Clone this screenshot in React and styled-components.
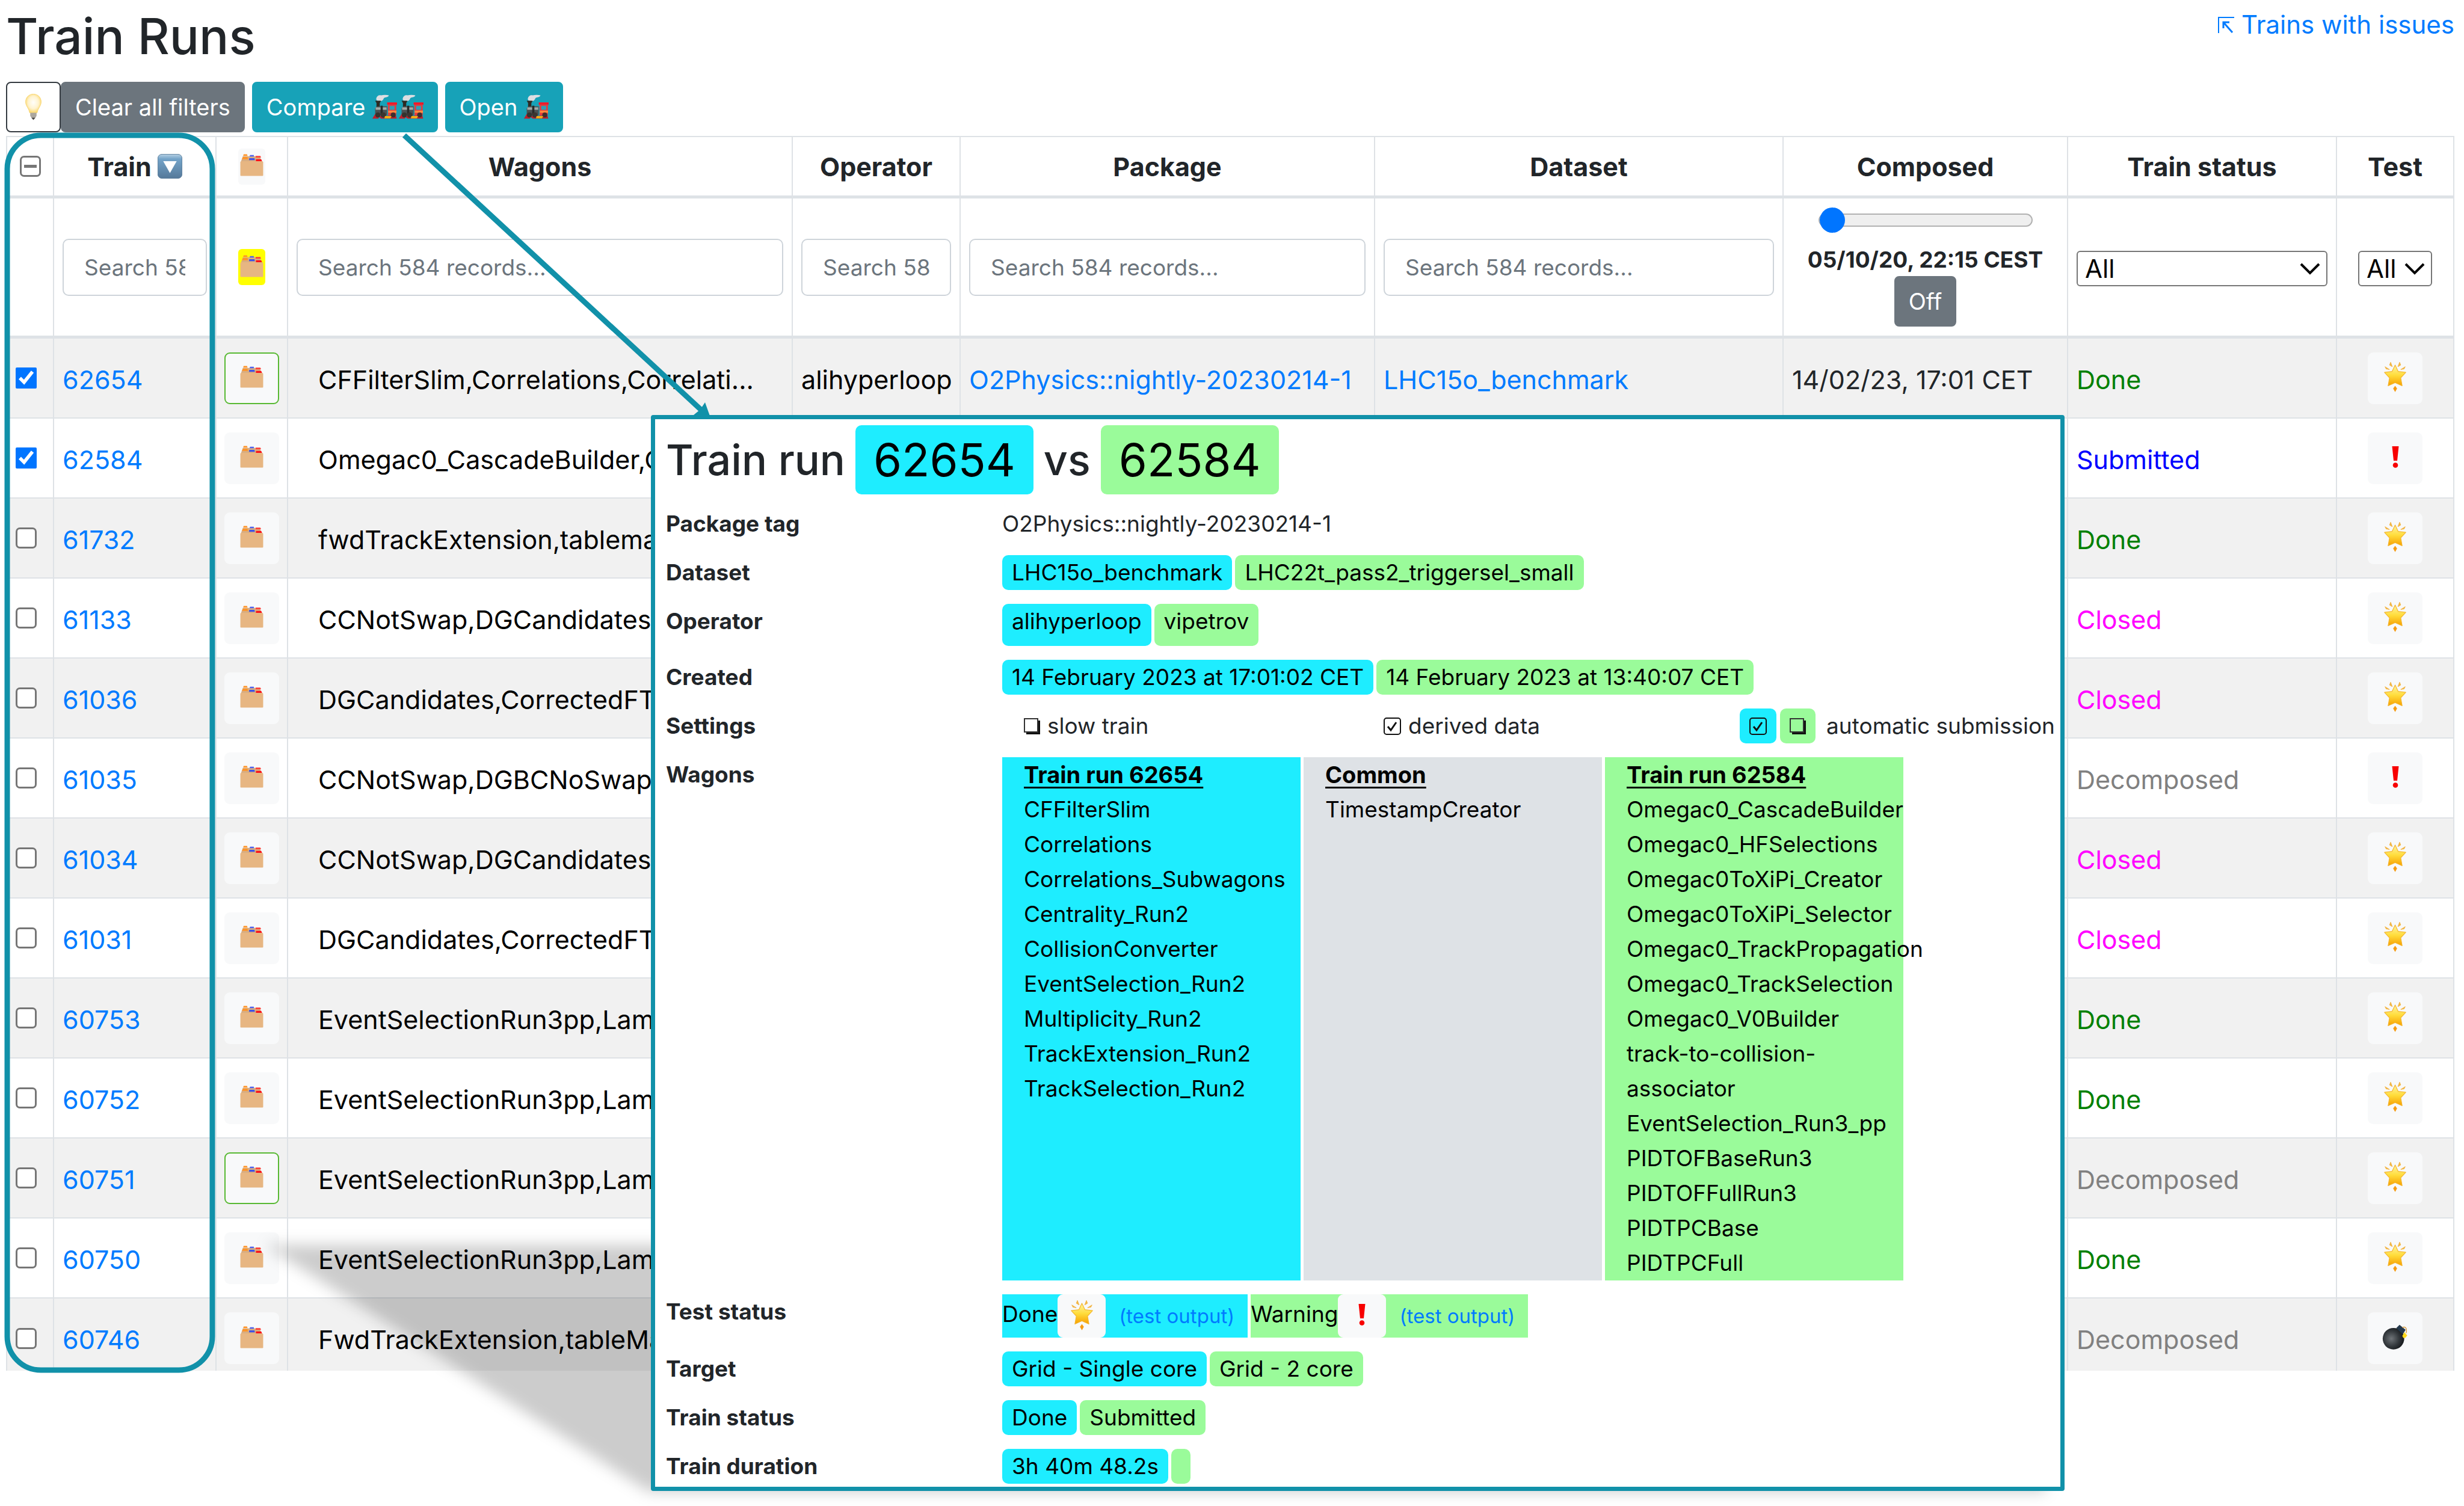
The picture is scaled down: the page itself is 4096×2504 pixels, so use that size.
import React from "react";
import styled, { createGlobalStyle, css } from "styled-components";

const TEAL = "#1191a9";
const CYAN = "#1eedff";
const GREEN = "#9afb9a";
const LINE = "#dee2e6";
const INK = "#212529";

const GlobalStyle = createGlobalStyle`
  *, *::before, *::after { box-sizing: border-box; }
  body { margin: 0; background: #fff; }
  button, input, select { font-family: inherit; margin: 0; }
  a { color: #007bff; text-decoration: none; }
`;

const Page = styled.div`
  position: relative;
  min-height: 100vh;
  padding: 0 16px 0 10px;
  overflow: hidden;
  font-family: Inter, "Liberation Sans", sans-serif;
  font-size: 42px;
  line-height: 62px;
  color: ${INK};
`;

const Header = styled.header`
  display: flex;
  justify-content: space-between;
  align-items: flex-start;
  padding: 11px 0 25px;
`;

const Title = styled.h1`
  margin: 0;
  font-size: 82px;
  line-height: 100px;
  font-weight: 500;
`;

const IssuesLink = styled.a`
  display: flex;
  align-items: center;
  gap: 12px;
  line-height: 60px;
`;

const Toolbar = styled.div`
  display: flex;
  gap: 12px;
  margin-bottom: 6px;
`;

const Joined = styled.div`
  display: flex;
`;

const Button = styled.button`
  display: flex;
  align-items: center;
  justify-content: center;
  gap: 11px;
  height: 84px;
  padding: 0 22px;
  border: 2px solid ${(p) => p.$tone};
  border-radius: 8px;
  background: ${(p) => p.$tone};
  color: #fff;
  font-size: 38px;
  ${(p) =>
    p.$outline &&
    css`
      border-color: #343a40;
      background: #fff;
      width: 91px;
    `}
`;

const Engines = styled.span`
  display: flex;
  gap: 3px;
`;

const Runs = styled.table`
  width: 100%;
  table-layout: fixed;
  border-collapse: separate;
  border-spacing: 0;
  font-size: 43px;
`;

const cell = css`
  padding: 0 14px;
  border-right: 2px solid ${LINE};
  &:first-child {
    border-left: 2px solid ${LINE};
  }
`;

const HeadCell = styled.th`
  ${cell}
  height: 104px;
  border-top: 2px solid ${LINE};
  border-bottom: 5px solid ${LINE};
  font-weight: 700;
  text-align: center;
`;

const FilterCell = styled.td`
  ${cell}
  height: 233px;
  border-bottom: 5px solid ${LINE};
  text-align: center;
`;

const Row = styled.tr`
  background: ${(p) => (p.$striped ? "#f1f1f1" : "#fff")};
`;

const Cell = styled.td`
  ${cell}
  height: ${(p) => (p.$last ? "120px" : "133px")};
  padding-top: ${(p) => (p.$last ? "12px" : "0")};
  padding-left: ${(p) => (p.$indent ? "50px" : "14px")};
  border-bottom: ${(p) => (p.$last ? "0" : "2px")} solid ${LINE};
`;

const CellText = styled.div`
  padding-top: 4px;
  color: ${(p) => p.$color || INK};
  white-space: nowrap;
`;

const HeadLabel = styled.span`
  display: inline-flex;
  align-items: center;
  gap: 10px;
`;

const Tick = styled.input`
  display: block;
  width: 35px;
  height: 35px;
  accent-color: #0075ff;
  &:not(:checked) {
    appearance: none;
    border: 3px solid #767676;
    border-radius: 7px;
    background: #fff;
  }
`;

const HeadTick = styled(Tick)`
  margin: 0 auto;
  &&:not(:checked) {
    background: linear-gradient(#767676, #767676) center / 21px 5px no-repeat #fff;
  }
`;

const Center = styled.div`
  display: flex;
  justify-content: center;
`;

const IconButton = styled.button`
  display: flex;
  align-items: center;
  justify-content: center;
  flex: none;
  width: ${(p) => (p.$small ? "45px" : "91px")};
  height: ${(p) => (p.$small ? "60px" : "86px")};
  padding: 0 0 4px;
  border: ${(p) => (p.$marked ? "2px solid #58b933" : "0")};
  border-radius: ${(p) => (p.$small ? "6px" : "9px")};
  background: ${(p) => (p.$active ? "#ffff00" : "#f8f9fa")};
`;

const Search = styled.input`
  display: block;
  width: 100%;
  height: 95px;
  padding: 0 34px;
  border: 2px solid #ced4da;
  border-radius: 10px;
  background: #fff;
  font-size: 37px;
  &::placeholder {
    color: #6c757d;
    opacity: 1;
  }
`;

const SliderStack = styled.div`
  display: flex;
  flex-direction: column;
  align-items: center;
`;

const Slider = styled.input`
  appearance: none;
  width: 356px;
  height: 42px;
  background: none;
  &::-webkit-slider-runnable-track {
    height: 22px;
    border: 2px solid #b2b2b2;
    border-radius: 11px;
    background: #efefef;
  }
  &::-webkit-slider-thumb {
    appearance: none;
    width: 42px;
    height: 42px;
    margin-top: -12px;
    border-radius: 50%;
    background: #0075ff;
  }
`;

const SliderLabel = styled.label`
  margin-top: 18px;
  font-size: 37px;
  line-height: 54px;
  font-weight: 700;
  white-space: nowrap;
`;

const SelectBox = styled.span`
  display: inline-grid;
  align-items: center;
  width: ${(p) => (p.$wide ? "100%" : "123px")};
  vertical-align: middle;
  & > * {
    grid-area: 1 / 1;
  }
  & > svg {
    justify-self: end;
    margin-right: 12px;
    pointer-events: none;
  }
`;

const Select = styled.select`
  appearance: none;
  width: 100%;
  height: 59px;
  padding: 0 12px;
  border: 2px solid #767676;
  border-radius: 6px;
  background: #fff;
  color: #000;
  font-size: 42px;
  line-height: 50px;
`;

const Overlay = styled.svg`
  position: absolute;
  top: 0;
  left: 0;
  pointer-events: none;
`;

const Popup = styled.section`
  position: absolute;
  top: 690px;
  left: 1082px;
  width: 2350px;
  padding: 10px 0 5px 18px;
  border: 7px solid ${TEAL};
  border-radius: 4px;
  background: #fff;
  font-size: 37px;
  line-height: 58px;
`;

const PopupTitle = styled.h2`
  display: flex;
  align-items: center;
  gap: 17px;
  margin: 0 0 20px;
  font-size: 70px;
  line-height: 115px;
  font-weight: 500;
`;

const Badge = styled.span`
  padding: 0 30px;
  border-radius: 10px;
  background: ${(p) => p.$bg};
  color: #000;
  font-size: 76px;
  font-weight: 400;
`;

const Details = styled.dl`
  display: flex;
  flex-direction: column;
  gap: 23px;
  margin: 0;
`;

const Detail = styled.div`
  display: grid;
  grid-template-columns: 559px 1fr;
  dt {
    font-weight: 700;
  }
  dd {
    display: flex;
    gap: 5px;
    min-width: 0;
    margin: 0;
  }
`;

const Pill = styled.span`
  min-height: ${(p) => (p.$tall ? "70px" : "58px")};
  padding: 0 16px;
  border-radius: 10px;
  background: ${(p) => p.$bg};
  color: #000;
  white-space: nowrap;
`;

const Settings = styled.div`
  display: grid;
  grid-template-columns: 34% 34% 1fr;
  width: 100%;
`;

const Setting = styled.span`
  display: flex;
  align-items: center;
  gap: ${(p) => (p.$pair ? "6px" : "12px")};
  padding-left: ${(p) => (p.$pair ? "30px" : "36px")};
  white-space: nowrap;
`;

const SettingText = styled.span`
  padding-left: 12px;
`;

const MarkPill = styled(Pill)`
  display: flex;
  align-items: center;
`;

const Wagons = styled.div`
  flex: none;
  width: 496px;
  padding: 0 36px;
  background: ${(p) => p.$bg};
  color: #000;
  h3 {
    margin: 0;
    font-size: 38px;
    font-weight: 700;
    text-decoration: underline;
    text-decoration-thickness: 3px;
    text-underline-offset: 6px;
  }
  ul {
    margin: 0;
    padding: 0;
    list-style: none;
  }
`;

const Result = styled.span`
  display: flex;
  align-items: center;
  height: 72px;
  background: ${(p) => p.$bg};
  color: #000;
  a {
    padding: 0 22px;
    font-size: 33px;
  }
`;

const ResultText = styled.span`
  padding-bottom: 6px;
`;

const ResultButton = styled(IconButton)`
  width: 80px;
  height: 72px;
`;

function Binder() {
  return (
    <svg width="39" height="37" viewBox="0 0 42 40">
      <path d="M5 4h30l4.500 10h-38z" fill="#d9ad80" />
      <path d="M6.500.5h6l1 3H5.500z" fill="#ff9427" />
      <path d="M5 5.500h8.500l.5 4H3.500z" fill="#ff9427" />
      <path d="M18 2h6.500l.7 2.500H17z" fill="#4f63f0" />
      <path d="M16.500 7.500h9.500l.5 3.500H16z" fill="#3f52e6" />
      <path d="M28 3.500h8.500l1.200 3H28z" fill="#ff4038" />
      <path d="M28.500 9.500h9.500l1.500 3.500h-11z" fill="#fb1018" />
      <path d="M.5 14.500 2 13h38l1.500 1.500V38a1.500 1.500 0 0 1-1.500 1.500H2A1.500 1.500 0 0 1 .5 38z" fill="#e7b682" />
    </svg>
  );
}

function Star() {
  return (
    <svg width="41" height="57" viewBox="0 0 44 60">
      <defs>
        <linearGradient id="star" x1="0" y1="0" x2="0" y2="1">
          <stop offset="0" stopColor="#fff3a0" />
          <stop offset=".5" stopColor="#ffdc3a" />
          <stop offset="1" stopColor="#f79f00" />
        </linearGradient>
      </defs>
      <path d="m22 9 5.500 11.500L41 22l-9 10 2.500 14L22 40.500 9.500 46 12 32 3 22l13.500-1.500z" fill="url(#star)" stroke="#f4b429" strokeWidth="1.200" strokeLinejoin="round" />
      <path d="m14 4 3 8-5-3zM30 4l-3 8 5-3zM4 12l8 5-6-1zM40 12l-8 5 6-1z" fill="#f2b544" stroke="#f2b544" strokeWidth="1" strokeLinejoin="round" />
      <path d="m22 46 3.500 5-3.500 6-3.500-6z" fill="#f59b12" />
    </svg>
  );
}

function Alert() {
  return (
    <svg width="14" height="38" viewBox="0 0 14 38">
      <path d="M1.500 1h11L10 25H4z" fill="#f80000" />
      <circle cx="7" cy="32.500" r="4.300" fill="#f80000" />
    </svg>
  );
}

function Bomb() {
  return (
    <svg width="43" height="44" viewBox="0 0 46 48">
      <defs>
        <radialGradient id="bomb" cx=".4" cy=".5" r=".6">
          <stop offset="0" stopColor="#6f7478" />
          <stop offset=".6" stopColor="#33383c" />
          <stop offset="1" stopColor="#15181b" />
        </radialGradient>
      </defs>
      <circle cx="20" cy="27" r="19.500" fill="url(#bomb)" />
      <path d="m25 8 6-6 11 9-5 8z" fill="#25394c" />
      <path d="M36 7c6-3 9 2 7 10" fill="none" stroke="#d99a3a" strokeWidth="1.500" />
      <path d="m40 15 2 3 3 3-3 4-4 1-2-4z" fill="#ffd91a" />
    </svg>
  );
}

function Bulb() {
  return (
    <svg width="27" height="44" viewBox="0 0 28 46">
      <defs>
        <radialGradient id="bulb" cx=".5" cy=".45" r=".55">
          <stop offset="0" stopColor="#fffefa" />
          <stop offset=".6" stopColor="#fff3cf" />
          <stop offset="1" stopColor="#fbd86e" />
        </radialGradient>
      </defs>
      <path d="M14 .5c7.500 0 13.500 5.600 13.500 13.500 0 7-5.500 10.500-7 19h-13C6 24.500.5 21 .5 14 .5 6.100 6.500.5 14 .5z" fill="url(#bulb)" stroke="#f8d56f" />
      <path d="M8.500 33h11v5.500L17 42h-6l-2.500-3.500z" fill="#aca79f" />
      <path d="M10.500 41.500h7L14 45.500z" fill="#4c4a47" />
    </svg>
  );
}

function Engine() {
  return (
    <svg width="41" height="42" viewBox="0 0 45 45">
      <path d="M7 7c1-5 5-7 9-6 4-1 10-1 14 0-1 4-6 3-9 5-1 4-5 7-8 5-4 1-6-1-6-4z" fill="#dcdee2" />
      <path d="M5 11h11l-2.500 4v8h-6v-8z" fill="#2e2a22" />
      <path d="M5 26c0-3 3-5 6-5h16v16H5z" fill="#4b5152" />
      <path d="M6 23h20v4.500H6z" fill="#a3aba8" />
      <path d="M15 20h4v17h-4z" fill="#282a29" />
      <path d="M27 14h18v4.500H27z" fill="#fb1626" />
      <path d="M28.500 18.500h15V38h-15z" fill="#e63b3d" />
      <path d="M31.500 20.500h9v7h-9z" fill="#2f9fb5" />
      <path d="M29 29h15v4H29z" fill="#ff8a3d" />
      <path d="M5 35 0 43.500h11l2-5h30l1.500 5H16" fill="#c01f2b" />
      <circle cx="10" cy="37" r="4.500" fill="#35332e" />
      <circle cx="20" cy="37" r="5" fill="#3c3530" />
      <circle cx="38" cy="37" r="4.500" fill="#3f2e2d" />
      <path d="M23 39h12l-2 4H22z" fill="#f7b012" />
    </svg>
  );
}

function SortDown() {
  return (
    <svg width="41" height="41" viewBox="0 0 44 44">
      <defs>
        <linearGradient id="sort" x1="0" y1="0" x2="0" y2="1">
          <stop offset="0" stopColor="#b5d0e4" />
          <stop offset=".2" stopColor="#73a3c8" />
          <stop offset="1" stopColor="#55799a" />
        </linearGradient>
      </defs>
      <rect x=".5" y=".5" width="43" height="43" rx="7" fill="url(#sort)" stroke="#587b99" />
      <path d="M10 13h24L22 34z" fill="#fff" />
    </svg>
  );
}

function CornerArrow() {
  return (
    <svg width="27" height="27" viewBox="0 0 27 27" fill="none" stroke="#007bff" strokeWidth="2">
      <path d="M1 27V1h26" />
      <path d="m9 9 15 17M9 19V9h10" strokeWidth="3" />
    </svg>
  );
}

function Chevron() {
  return (
    <svg width="34" height="22" viewBox="0 0 34 22" fill="none" stroke="#000" strokeWidth="4">
      <path d="m2 3 15 15L32 3" />
    </svg>
  );
}

function Empty({ fill = "#fff" }) {
  return (
    <svg width="27" height="27" viewBox="0 0 27 27">
      <path d="M4 4h23v23H4z" fill="#111" />
      <path d="M1 1h22v22H1z" fill={fill} stroke="#333" strokeWidth="2" />
    </svg>
  );
}

function Checked() {
  return (
    <svg width="29" height="29" viewBox="0 0 29 29" fill="none" stroke="#111" strokeWidth="2">
      <rect x="1" y="1" width="27" height="27" rx="4" />
      <path d="m7 15 5 6L21 8" strokeWidth="3" />
    </svg>
  );
}

const STATUS = { Done: "#008000", Submitted: "#0000ff", Closed: "#ff00ff", Decomposed: "#808080" };
const RESULT = { star: Star, alert: Alert, bomb: Bomb };

const RUNS = [
  { id: 62654, wagons: "CFFilterSlim,Correlations,Correlati...", operator: "alihyperloop", pkg: "O2Physics::nightly-20230214-1", dataset: "LHC15o_benchmark", composed: "14/02/23, 17:01 CET", status: "Done", test: "star", checked: true, marked: true },
  { id: 62584, wagons: "Omegac0_CascadeBuilder,O", status: "Submitted", test: "alert", checked: true },
  { id: 61732, wagons: "fwdTrackExtension,tablema", status: "Done", test: "star" },
  { id: 61133, wagons: "CCNotSwap,DGCandidates", status: "Closed", test: "star" },
  { id: 61036, wagons: "DGCandidates,CorrectedFT", status: "Closed", test: "star" },
  { id: 61035, wagons: "CCNotSwap,DGBCNoSwap,", status: "Decomposed", test: "alert" },
  { id: 61034, wagons: "CCNotSwap,DGCandidates", status: "Closed", test: "star" },
  { id: 61031, wagons: "DGCandidates,CorrectedFT", status: "Closed", test: "star" },
  { id: 60753, wagons: "EventSelectionRun3pp,Lam", status: "Done", test: "star" },
  { id: 60752, wagons: "EventSelectionRun3pp,Lam", status: "Done", test: "star" },
  { id: 60751, wagons: "EventSelectionRun3pp,Lam", status: "Decomposed", test: "star", marked: true },
  { id: 60750, wagons: "EventSelectionRun3pp,Lam", status: "Done", test: "star" },
  { id: 60746, wagons: "FwdTrackExtension,tableMa", status: "Decomposed", test: "bomb" },
];

const FIRST = ["CFFilterSlim", "Correlations", "Correlations_Subwagons", "Centrality_Run2", "CollisionConverter", "EventSelection_Run2", "Multiplicity_Run2", "TrackExtension_Run2", "TrackSelection_Run2"];
const SECOND = ["Omegac0_CascadeBuilder", "Omegac0_HFSelections", "Omegac0ToXiPi_Creator", "Omegac0ToXiPi_Selector", "Omegac0_TrackPropagation", "Omegac0_TrackSelection", "Omegac0_V0Builder", "track-to-collision-associator", "EventSelection_Run3_pp", "PIDTOFBaseRun3", "PIDTOFFullRun3", "PIDTPCBase", "PIDTPCFull"];

function SearchCell({ name }) {
  return (
    <FilterCell>
      <Search type="text" placeholder="Search 584 records..." aria-label={name} />
    </FilterCell>
  );
}

function AllSelect({ name, wide }) {
  return (
    <SelectBox $wide={wide}>
      <Select aria-label={name}>
        <option>All</option>
      </Select>
      <Chevron />
    </SelectBox>
  );
}

function RunRow({ run, index, last }) {
  const Outcome = RESULT[run.test];
  return (
    <Row $striped={index % 2 === 0}>
      <Cell $last={last}>
        <Tick type="checkbox" defaultChecked={run.checked} aria-label={`Select ${run.id}`} />
      </Cell>
      <Cell $last={last}>
        <CellText><a href={`#${run.id}`}>{run.id}</a></CellText>
      </Cell>
      <Cell $last={last}>
        <Center>
          <IconButton $marked={run.marked} aria-label="Wagons">
            <Binder />
          </IconButton>
        </Center>
      </Cell>
      <Cell $last={last} $indent><CellText $color="#000">{run.wagons}</CellText></Cell>
      <Cell $last={last}><CellText $color="#000">{run.operator}</CellText></Cell>
      <Cell $last={last}>{run.pkg && <CellText><a href="#package">{run.pkg}</a></CellText>}</Cell>
      <Cell $last={last}>{run.dataset && <CellText><a href="#dataset">{run.dataset}</a></CellText>}</Cell>
      <Cell $last={last}><CellText>{run.composed}</CellText></Cell>
      <Cell $last={last}><CellText $color={STATUS[run.status]}>{run.status}</CellText></Cell>
      <Cell $last={last}>
        <Center>
          <IconButton aria-label="Test">
            <Outcome />
          </IconButton>
        </Center>
      </Cell>
    </Row>
  );
}

function PairDetail({ label, first, second, tall }) {
  return (
    <Detail>
      <dt>{label}</dt>
      <dd>
        <Pill $bg={CYAN} $tall={tall}>{first}</Pill>
        <Pill $bg={GREEN} $tall={tall}>{second}</Pill>
      </dd>
    </Detail>
  );
}

function WagonList({ title, items, bg }) {
  return (
    <Wagons $bg={bg}>
      <h3>{title}</h3>
      <ul>
        {items.map((item) => (
          <li key={item}>{item}</li>
        ))}
      </ul>
    </Wagons>
  );
}

function Comparison() {
  return (
    <Popup>
      <PopupTitle>
        Train run <Badge $bg={CYAN}>62654</Badge> vs <Badge $bg={GREEN}>62584</Badge>
      </PopupTitle>
      <Details>
        <Detail>
          <dt>Package tag</dt>
          <dd>O2Physics::nightly-20230214-1</dd>
        </Detail>
        <PairDetail label="Dataset" first="LHC15o_benchmark" second="LHC22t_pass2_triggersel_small" />
        <PairDetail label="Operator" first="alihyperloop" second="vipetrov" tall />
        <PairDetail label="Created" first="14 February 2023 at 17:01:02 CET" second="14 February 2023 at 13:40:07 CET" />
        <Detail>
          <dt>Settings</dt>
          <dd>
            <Settings>
              <Setting><Empty />slow train</Setting>
              <Setting><Checked />derived data</Setting>
              <Setting $pair>
                <MarkPill $bg={CYAN}><Checked /></MarkPill>
                <MarkPill $bg={GREEN}><Empty fill={GREEN} /></MarkPill>
                <SettingText>automatic submission</SettingText>
              </Setting>
            </Settings>
          </dd>
        </Detail>
        <Detail>
          <dt>Wagons</dt>
          <dd>
            <WagonList title="Train run 62654" items={FIRST} bg={CYAN} />
            <WagonList title="Common" items={["TimestampCreator"]} bg={LINE} />
            <WagonList title="Train run 62584" items={SECOND} bg={GREEN} />
          </dd>
        </Detail>
        <Detail>
          <dt>Test status</dt>
          <dd>
            <Result $bg={CYAN}>
              <ResultText>Done</ResultText>
              <ResultButton aria-label="Done"><Star /></ResultButton>
              <a href="#output-62654">(test output)</a>
            </Result>
            <Result $bg={GREEN}>
              <ResultText>Warning</ResultText>
              <ResultButton aria-label="Warning"><Alert /></ResultButton>
              <a href="#output-62584">(test output)</a>
            </Result>
          </dd>
        </Detail>
        <PairDetail label="Target" first="Grid - Single core" second="Grid - 2 core" />
        <PairDetail label="Train status" first="Done" second="Submitted" />
        <PairDetail label="Train duration" first="3h 40m 48.2s" second="" />
      </Details>
    </Popup>
  );
}

export default function App() {
  return (
    <Page>
      <GlobalStyle />
      <Header>
        <Title>Train Runs</Title>
        <IssuesLink href="#issues">
          <CornerArrow />
          Trains with issues
        </IssuesLink>
      </Header>
      <Toolbar>
        <Joined>
          <Button $outline aria-label="Hints"><Bulb /></Button>
          <Button $tone="#6c757d">Clear all filters</Button>
        </Joined>
        <Button $tone="#17a2b8">
          Compare
          <Engines><Engine /><Engine /></Engines>
        </Button>
        <Button $tone="#17a2b8">
          Open
          <Engine />
        </Button>
      </Toolbar>
      <Runs>
        <colgroup>
          <col style={{ width: 80 }} />
          <col style={{ width: 270 }} />
          <col style={{ width: 119 }} />
          <col />
          <col style={{ width: 279 }} />
          <col style={{ width: 689 }} />
          <col style={{ width: 679 }} />
          <col style={{ width: 473 }} />
          <col style={{ width: 447 }} />
          <col style={{ width: 195 }} />
        </colgroup>
        <thead>
          <tr>
            <HeadCell><HeadTick type="checkbox" aria-label="Select all" /></HeadCell>
            <HeadCell><HeadLabel>Train <SortDown /></HeadLabel></HeadCell>
            <HeadCell><Center><IconButton $small aria-label="Wagons"><Binder /></IconButton></Center></HeadCell>
            <HeadCell>Wagons</HeadCell>
            <HeadCell>Operator</HeadCell>
            <HeadCell>Package</HeadCell>
            <HeadCell>Dataset</HeadCell>
            <HeadCell>Composed</HeadCell>
            <HeadCell>Train status</HeadCell>
            <HeadCell>Test</HeadCell>
          </tr>
          <tr>
            <FilterCell />
            <SearchCell name="Train" />
            <FilterCell><Center><IconButton $small $active aria-label="Wagons"><Binder /></IconButton></Center></FilterCell>
            <SearchCell name="Wagons" />
            <SearchCell name="Operator" />
            <SearchCell name="Package" />
            <SearchCell name="Dataset" />
            <FilterCell>
              <SliderStack>
                <Slider id="composed" type="range" min="0" max="100" defaultValue="0" />
                <SliderLabel htmlFor="composed">05/10/20, 22:15 CEST</SliderLabel>
                <Button $tone="#6c757d">Off</Button>
              </SliderStack>
            </FilterCell>
            <FilterCell><AllSelect name="Train status" wide /></FilterCell>
            <FilterCell><AllSelect name="Test" /></FilterCell>
          </tr>
        </thead>
        <tbody>
          {RUNS.map((run, i) => (
            <RunRow key={run.id} run={run} index={i} last={i === RUNS.length - 1} />
          ))}
        </tbody>
      </Runs>
      <Overlay width="4096" height="2504" viewBox="0 0 4096 2504">
        <defs>
          <filter id="soft" x="-5%" y="-20%" width="110%" height="140%">
            <feGaussianBlur stdDeviation="12" />
          </filter>
        </defs>
        <path d="M440 2070H3400V2480H1078z" fill="#000" fillOpacity=".2" filter="url(#soft)" />
      </Overlay>
      <Comparison />
      <Overlay width="4096" height="2504" viewBox="0 0 4096 2504">
        <rect x="12" y="225" width="341" height="2053" rx="56" fill="none" stroke={TEAL} strokeWidth="9" />
        <path d="M672 225 1165 681" stroke={TEAL} strokeWidth="9" />
        <path d="m1172 669 10 28-29-7 11-9z" fill={TEAL} />
      </Overlay>
    </Page>
  );
}
